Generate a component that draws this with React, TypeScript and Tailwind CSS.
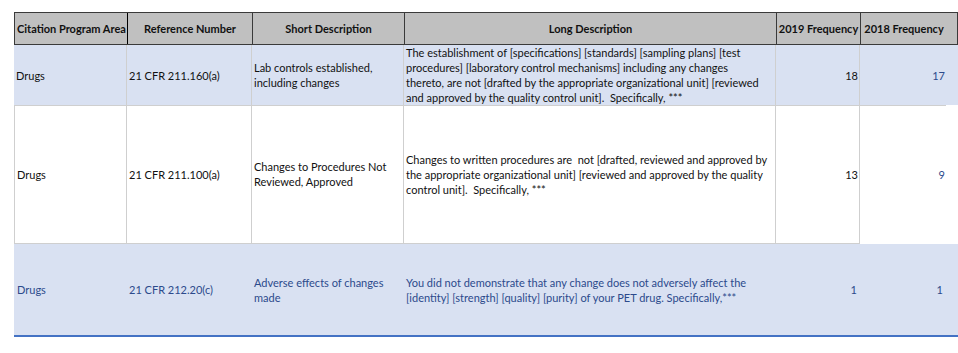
import React from 'react';

const cols = 'grid grid-cols-[113px_125px_152px_372px_84px_86px]';

export default function App() {
    return (
        <div className="w-[958px] h-[353px] bg-white pt-[12px] pl-[14px] text-[11px] leading-[15px] text-[#111] font-['Lato','Open_Sans',sans-serif]">
            {/* Header */}
            <div className={`${cols} h-[33px] bg-[#c0c0c0] border border-[#3a3a3a] font-bold`}>
                <div className="flex items-center pl-[2px] whitespace-nowrap border-r border-black">Citation Program Area</div>
                <div className="flex items-center justify-center border-r border-[#3a3a3a]">Reference Number</div>
                <div className="flex items-center justify-center border-r border-[#3a3a3a]">Short Description</div>
                <div className="flex items-center justify-center border-r border-[#3a3a3a]">Long Description</div>
                <div className="flex items-center justify-center whitespace-nowrap border-r border-[#3a3a3a]">2019 Frequency</div>
                <div className="flex items-center justify-center whitespace-nowrap">2018 Frequency</div>
            </div>

            {/* Row 1 */}
            <div className={`${cols} h-[60px] bg-[#d9e1f2]`}>
                <div className="flex items-center pl-[2px] border-r border-b border-[#cfcfcf]">Drugs</div>
                <div className="flex items-center pl-[2px] border-r border-b border-[#cfcfcf]">21 CFR 211.160(a)</div>
                <div className="flex items-center pl-[2px] border-r border-b border-[#cfcfcf]">
                    <div>Lab controls established,<br />including changes</div>
                </div>
                <div className="flex items-center pl-[2px] border-r border-b border-[#cfcfcf] whitespace-nowrap">
                    <div>
                        The establishment of [specifications] [standards] [sampling plans] [test<br />
                        procedures] [laboratory control mechanisms] including any changes<br />
                        thereto, are not [drafted by the appropriate organizational unit] [reviewed<br />
                        and approved by the quality control unit].&nbsp; Specifically, ***
                    </div>
                </div>
                <div className="flex items-center justify-end pr-[1px] border-r border-b border-[#cfcfcf]">18</div>
                <div className="flex items-center justify-end pr-[1px] border-b border-[#cfcfcf] text-[#2c4a8c]">17</div>
            </div>

            {/* Row 2 */}
            <div className={`${cols} h-[139px]`}>
                <div className="flex items-center pl-[2px] border-l border-r border-b border-[#cfcfcf]">Drugs</div>
                <div className="flex items-center pl-[2px] border-r border-b border-[#cfcfcf]">21 CFR 211.100(a)</div>
                <div className="flex items-center pl-[2px] border-r border-b border-[#cfcfcf]">
                    <div>Changes to Procedures Not<br />Reviewed, Approved</div>
                </div>
                <div className="flex items-center pl-[2px] border-r border-b border-[#cfcfcf] whitespace-nowrap">
                    <div>
                        Changes to written procedures are&nbsp; not [drafted, reviewed and approved by<br />
                        the appropriate organizational unit] [reviewed and approved by the quality<br />
                        control unit].&nbsp; Specifically, ***
                    </div>
                </div>
                <div className="flex items-center justify-end pr-[1px] border-r border-b border-[#cfcfcf]">13</div>
                <div className="flex items-center justify-end pr-[1px] text-[#2c4a8c]">9</div>
            </div>

            {/* Row 3 */}
            <div className={`${cols} h-[93px] bg-[#d9e1f2] border-b-2 border-[#4472c4] text-[#2c4a8c]`}>
                <div className="flex items-center pl-[3px]">Drugs</div>
                <div className="flex items-center pl-[2px]">21 CFR 212.20(c)</div>
                <div className="flex items-center pl-[2px]">
                    <div>Adverse effects of changes<br />made</div>
                </div>
                <div className="flex items-center pl-[2px] whitespace-nowrap">
                    <div>
                        You did not demonstrate that any change does not adversely affect the<br />
                        [identity] [strength] [quality] [purity] of your PET drug. Specifically,***
                    </div>
                </div>
                <div className="flex items-center justify-end pr-[3px]">1</div>
                <div className="flex items-center justify-end pr-[3px]">1</div>
            </div>
        </div>
    );
}
